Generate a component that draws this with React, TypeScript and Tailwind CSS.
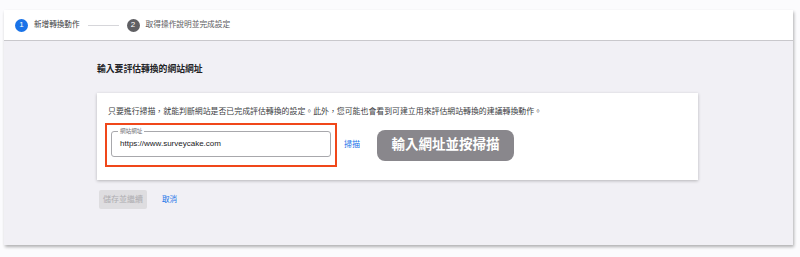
const font = {
  fontFamily: '"Liberation Sans", "Noto Sans CJK TC", sans-serif',
};

const StepHeader = () => {
  return (
    <div className="flex h-[31px] items-center border-b border-[#c9c8cc] bg-white pl-[11px]">
      <div className="flex items-center gap-[6px]">
        <div className="flex h-[13px] w-[13px] items-center justify-center rounded-full bg-[#1a73e8] text-[8px] leading-none text-white">
          1
        </div>
        <div className="text-[7.6px] text-[#3c3c40]">新增轉換動作</div>
      </div>
      <div className="mx-[8px] h-px w-[31px] bg-[#d6d6da]" />
      <div className="flex items-center gap-[6px]">
        <div className="flex h-[13px] w-[13px] items-center justify-center rounded-full bg-[#5f5f63] text-[8px] leading-none text-white">
          2
        </div>
        <div className="text-[7.7px] text-[#5a5a5e]">取得操作說明並完成設定</div>
      </div>
    </div>
  );
};

export default function App() {
  return (
    <div className="h-[257px] w-[800px] overflow-hidden bg-[#fbfbfd]" style={font}>
      <div className="ml-[4px] mt-[10px] flex h-[235px] w-[789px] flex-col bg-[#f1f0f5] shadow-[1px_2px_3px_rgba(0,0,0,0.3)]">
        <StepHeader />
        <div className="pl-[93px]">
          <div className="mt-[20px] text-[8.8px] font-bold leading-[16px] text-[#202124]">
            輸入要評估轉換的網站網址
          </div>
          <div className="mt-[16px] h-[87px] w-[601px] bg-white px-[8px] pt-[12px] shadow-[0_1px_3px_rgba(0,0,0,0.25)]">
            <div className="pl-[3px] text-[7.9px] leading-[14px] text-[#3c4043]">
              只要進行掃描，就能判斷網站是否已完成評估轉換的設定。此外，您可能也會看到可建立用來評估網站轉換的建議轉換動作。
            </div>
            <div className="mt-[4px] flex items-center">
              <div className="h-[44px] w-[232px] border-2 border-[#f0471a] pl-[4px] pt-[6px]">
                <div className="relative flex h-[26px] w-[220px] items-center rounded-[3px] border border-[#a8a8ac] pl-[8px]">
                  <span className="absolute -top-[6px] left-[6px] bg-white px-[2px] text-[5.6px] leading-[10px] text-[#6f6f73]">
                    網站網址
                  </span>
                  <span className="text-[8px] text-[#202124]">https://www.surveycake.com</span>
                </div>
              </div>
              <div className="ml-[7px] text-[8px] text-[#1a73e8]">掃描</div>
              <div className="ml-[17px] flex h-[31px] w-[137px] items-center justify-center rounded-[8px] bg-[#89878c] text-[13.5px] font-bold text-white">
                輸入網址並按掃描
              </div>
            </div>
          </div>
          <div className="mt-[10px] flex items-center">
            <div className="ml-[2px] flex h-[19px] w-[48px] items-center justify-center rounded-[2px] bg-[#dedde0] text-[8px] text-[#aeadb1]">
              儲存並繼續
            </div>
            <div className="ml-[15px] text-[7.6px] text-[#1a73e8]">取消</div>
          </div>
        </div>
      </div>
    </div>
  );
}
